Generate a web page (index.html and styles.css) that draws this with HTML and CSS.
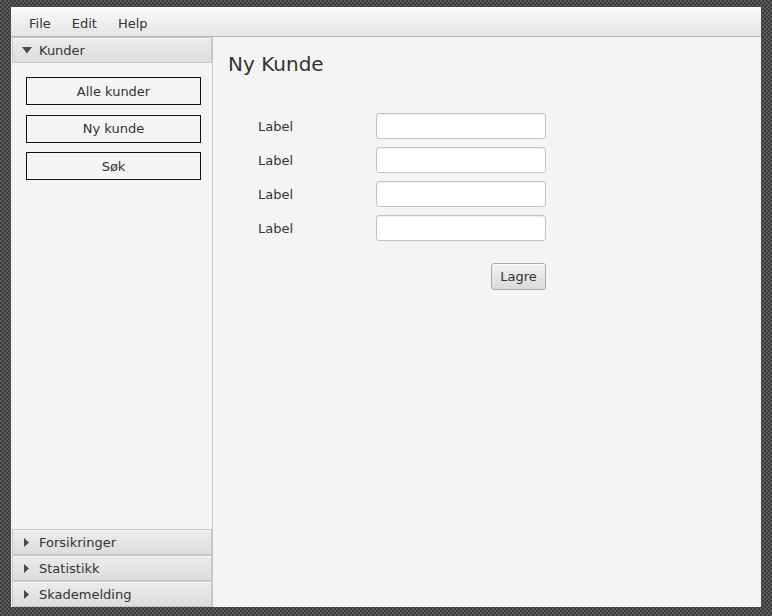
FILE: index.html
```html
<!DOCTYPE html>
<html>
<head>
<meta charset="utf-8">
<link rel="stylesheet" href="styles.css">
</head>
<body>
<div class="window">
  <div class="menubar">
    <span class="menu-item">File</span>
    <span class="menu-item">Edit</span>
    <span class="menu-item">Help</span>
  </div>
  <div class="body">
    <div class="sidebar">
      <div class="pane-header">
        <svg class="arrow" width="10" height="7" viewBox="0 0 10 7"><polygon points="0,0 10,0 5,6.5" fill="#4a4a4a"/></svg>
        <span>Kunder</span>
      </div>
      <div class="pane-content">
        <div class="nav-button">Alle kunder</div>
        <div class="nav-button">Ny kunde</div>
        <div class="nav-button">Søk</div>
      </div>
      <div class="pane-header">
        <svg class="arrow" width="10" height="9" viewBox="0 0 10 9"><polygon points="2,0 7,4.5 2,9" fill="#4a4a4a"/></svg>
        <span>Forsikringer</span>
      </div>
      <div class="pane-header">
        <svg class="arrow" width="10" height="9" viewBox="0 0 10 9"><polygon points="2,0 7,4.5 2,9" fill="#4a4a4a"/></svg>
        <span>Statistikk</span>
      </div>
      <div class="pane-header">
        <svg class="arrow" width="10" height="9" viewBox="0 0 10 9"><polygon points="2,0 7,4.5 2,9" fill="#4a4a4a"/></svg>
        <span>Skademelding</span>
      </div>
    </div>
    <div class="main">
      <h1 class="title">Ny Kunde</h1>
      <div class="form">
        <span class="label">Label</span><div class="field"></div>
        <span class="label">Label</span><div class="field"></div>
        <span class="label">Label</span><div class="field"></div>
        <span class="label">Label</span><div class="field"></div>
        <div class="btn-cell"><span class="save-button">Lagre</span></div>
      </div>
    </div>
  </div>
</div>
</body>
</html>
```
FILE: styles.css
```css
html, body {
  margin: 0;
  padding: 0;
}
body {
  width: 772px;
  height: 616px;
  overflow: hidden;
  background: repeating-conic-gradient(#3c3c3c 0 25%, #5a5a5a 0 50%) 0 0 / 4px 4px;
  font-family: "DejaVu Sans", sans-serif;
  font-size: 13px;
  color: #333;
}
.window {
  margin: 7px 0 0 11px;
  width: 750px;
  height: 600px;
  background: #f4f4f4;
  display: flex;
  flex-direction: column;
}
.menubar {
  box-sizing: border-box;
  height: 30px;
  flex: none;
  display: flex;
  align-items: center;
  padding: 3px 0 0 7.5px;
  background: linear-gradient(#fbfbfb, #e4e4e4);
  border-bottom: 1px solid #b5b5b5;
}
.menu-item {
  padding: 0 10.5px;
}
.body {
  flex: 1;
  display: flex;
  min-height: 0;
}
.sidebar {
  width: 201px;
  flex: none;
  display: flex;
  flex-direction: column;
  border-right: 1px solid #c6c6c6;
}
.pane-header {
  box-sizing: border-box;
  height: 26px;
  flex: none;
  display: flex;
  align-items: center;
  padding-left: 9px;
  margin-left: 1px;
  background: linear-gradient(#ececec, #dcdcdc);
  border: 1px solid #c8c8c8;
  box-shadow: inset 0 1px 0 #f6f6f6;
}
.arrow {
  margin-right: 7px;
  flex: none;
}
.pane-content {
  flex: 1;
  display: flex;
  flex-direction: column;
  gap: 9.5px;
  padding: 14px 11px 0 15px;
}
.nav-button {
  box-sizing: border-box;
  height: 28px;
  border: 1px solid #111;
  display: flex;
  align-items: center;
  justify-content: center;
}
.main {
  flex: 1;
  padding: 15px 15px 0 15px;
}
.title {
  margin: 0;
  font-weight: normal;
  font-size: 20px;
  line-height: 24px;
  color: #333;
}
.form {
  margin: 37px 0 0 30px;
  display: grid;
  grid-template-columns: 118px 170px;
  grid-auto-rows: 26px;
  row-gap: 8px;
  align-items: center;
}
.field {
  box-sizing: border-box;
  height: 26px;
  background: #fff;
  border: 1px solid #c4c4c4;
  border-radius: 3px;
  box-shadow: inset 0 1px 1px #ececec;
}
.btn-cell {
  grid-column: 2;
  display: flex;
  justify-content: flex-end;
  margin-top: 29px;
}
.save-button {
  box-sizing: border-box;
  height: 27px;
  width: 55px;
  display: flex;
  align-items: center;
  justify-content: center;
  border: 1px solid #aaa;
  border-radius: 3px;
  background: linear-gradient(#f1f1f1, #dadada);
  box-shadow: inset 0 1px 0 #fafafa;
}
```
